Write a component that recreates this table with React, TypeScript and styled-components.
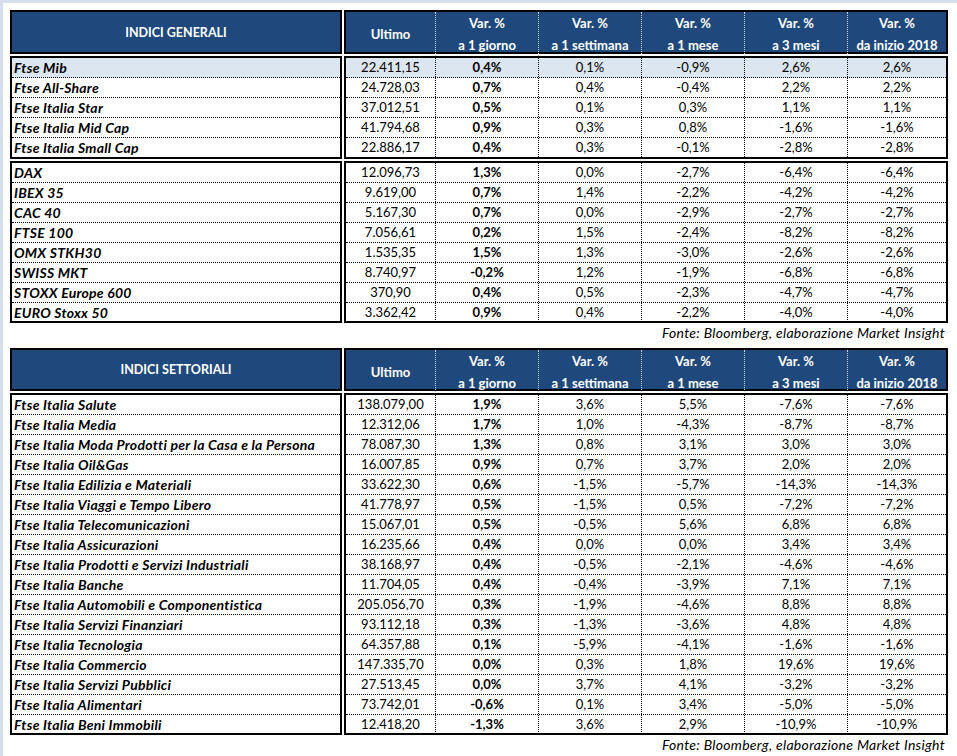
import { createGlobalStyle, styled } from "styled-components";

const GlobalStyle = createGlobalStyle`
  html, body {
    margin: 0;
    padding: 0;
    background: #ffffff;
  }
  body {
    font-family: Lato, "Open Sans", "Liberation Sans", sans-serif;
    color: #000;
  }
`;

const Page = styled.div`
  width: 957px;
  height: 756px;
  box-sizing: border-box;
  border-top: 3px solid #d5deeb;
  border-left: 3px solid #d5deeb;
  padding: 7px 0 0 7px;
  overflow: hidden;
`;

const Table = styled.div`
  display: flex;
  flex-direction: column;
  gap: 2px;
  width: 938px;
`;

const Block = styled.div`
  display: flex;
  gap: 2px;
`;

const NameBox = styled.div`
  width: 332px;
  box-sizing: border-box;
  border: 2px solid #000;
`;

const DataBox = styled.div`
  width: 604px;
  box-sizing: border-box;
  border: 2px solid #000;
`;

const cols = "89px 103px 103px 103px 103px 1fr";

const HeadName = styled.div<{ $h: number }>`
  height: ${(p) => p.$h}px;
  background: #1f497d;
  color: #fff;
  font-weight: 700;
  font-size: 12.5px;
  display: flex;
  align-items: center;
  justify-content: center;
`;

const HeadRow = styled.div<{ $h: number }>`
  height: ${(p) => p.$h}px;
  background: #1f497d;
  display: grid;
  grid-template-columns: ${cols};
`;

const HeadCell = styled.div<{ $sep?: boolean; $single?: boolean }>`
  color: #fff;
  font-weight: 700;
  font-size: 13px;
  line-height: ${(p) => (p.$single ? "normal" : "22px")};
  display: flex;
  flex-direction: column;
  align-items: center;
  justify-content: ${(p) => (p.$single ? "center" : "flex-start")};
  white-space: nowrap;
  border-left: ${(p) => (p.$sep ? "1px dotted #c8d2e0" : "none")};
`;

const NameRow = styled.div<{ $hl?: boolean; $last: number }>`
  height: 20px;
  box-sizing: border-box;
  border-bottom: 1px dotted #000;
  background: ${(p) => (p.$hl ? "#dce6f1" : "transparent")};
  font-size: 14px;
  letter-spacing: 0.25px;
  font-weight: 700;
  font-style: italic;
  line-height: 19px;
  padding-left: 2px;
  white-space: nowrap;
  &:last-child {
    border-bottom: none;
    height: ${(p) => p.$last}px;
  }
`;

const DataRow = styled.div<{ $hl?: boolean; $last: number }>`
  height: 20px;
  box-sizing: border-box;
  border-bottom: 1px dotted #000;
  background: ${(p) => (p.$hl ? "#dce6f1" : "transparent")};
  display: grid;
  grid-template-columns: ${cols};
  &:last-child {
    border-bottom: none;
    height: ${(p) => p.$last}px;
  }
`;

const Cell = styled.div<{ $sep?: boolean; $bold?: boolean }>`
  font-size: 13px;
  line-height: 19px;
  text-align: center;
  font-weight: ${(p) => (p.$bold ? 700 : 400)};
  border-left: ${(p) => (p.$sep ? "1px dotted #000" : "none")};
`;

const Source = styled.div<{ $h: number }>`
  height: ${(p) => p.$h}px;
  width: 935px;
  text-align: right;
  font-size: 14px;
  letter-spacing: 0.3px;
  font-style: italic;
  line-height: 20px;
`;

type Row = [string, string, string, string, string, string, string];

const generali1: Row[] = [
  ["Ftse Mib", "22.411,15", "0,4%", "0,1%", "-0,9%", "2,6%", "2,6%"],
  ["Ftse All-Share", "24.728,03", "0,7%", "0,4%", "-0,4%", "2,2%", "2,2%"],
  ["Ftse Italia Star", "37.012,51", "0,5%", "0,1%", "0,3%", "1,1%", "1,1%"],
  ["Ftse Italia Mid Cap", "41.794,68", "0,9%", "0,3%", "0,8%", "-1,6%", "-1,6%"],
  ["Ftse Italia Small Cap", "22.886,17", "0,4%", "0,3%", "-0,1%", "-2,8%", "-2,8%"],
];

const generali2: Row[] = [
  ["DAX", "12.096,73", "1,3%", "0,0%", "-2,7%", "-6,4%", "-6,4%"],
  ["IBEX 35", "9.619,00", "0,7%", "1,4%", "-2,2%", "-4,2%", "-4,2%"],
  ["CAC 40", "5.167,30", "0,7%", "0,0%", "-2,9%", "-2,7%", "-2,7%"],
  ["FTSE 100", "7.056,61", "0,2%", "1,5%", "-2,4%", "-8,2%", "-8,2%"],
  ["OMX STKH30", "1.535,35", "1,5%", "1,3%", "-3,0%", "-2,6%", "-2,6%"],
  ["SWISS MKT", "8.740,97", "-0,2%", "1,2%", "-1,9%", "-6,8%", "-6,8%"],
  ["STOXX Europe 600", "370,90", "0,4%", "0,5%", "-2,3%", "-4,7%", "-4,7%"],
  ["EURO Stoxx 50", "3.362,42", "0,9%", "0,4%", "-2,2%", "-4,0%", "-4,0%"],
];

const settoriali: Row[] = [
  ["Ftse Italia Salute", "138.079,00", "1,9%", "3,6%", "5,5%", "-7,6%", "-7,6%"],
  ["Ftse Italia Media", "12.312,06", "1,7%", "1,0%", "-4,3%", "-8,7%", "-8,7%"],
  ["Ftse Italia Moda Prodotti per la Casa e la Persona", "78.087,30", "1,3%", "0,8%", "3,1%", "3,0%", "3,0%"],
  ["Ftse Italia Oil&Gas", "16.007,85", "0,9%", "0,7%", "3,7%", "2,0%", "2,0%"],
  ["Ftse Italia Edilizia e Materiali", "33.622,30", "0,6%", "-1,5%", "-5,7%", "-14,3%", "-14,3%"],
  ["Ftse Italia Viaggi e Tempo Libero", "41.778,97", "0,5%", "-1,5%", "0,5%", "-7,2%", "-7,2%"],
  ["Ftse Italia Telecomunicazioni", "15.067,01", "0,5%", "-0,5%", "5,6%", "6,8%", "6,8%"],
  ["Ftse Italia Assicurazioni", "16.235,66", "0,4%", "0,0%", "0,0%", "3,4%", "3,4%"],
  ["Ftse Italia Prodotti e Servizi Industriali", "38.168,97", "0,4%", "-0,5%", "-2,1%", "-4,6%", "-4,6%"],
  ["Ftse Italia Banche", "11.704,05", "0,4%", "-0,4%", "-3,9%", "7,1%", "7,1%"],
  ["Ftse Italia Automobili e Componentistica", "205.056,70", "0,3%", "-1,9%", "-4,6%", "8,8%", "8,8%"],
  ["Ftse Italia Servizi Finanziari", "93.112,18", "0,3%", "-1,3%", "-3,6%", "4,8%", "4,8%"],
  ["Ftse Italia Tecnologia", "64.357,88", "0,1%", "-5,9%", "-4,1%", "-1,6%", "-1,6%"],
  ["Ftse Italia Commercio", "147.335,70", "0,0%", "0,3%", "1,8%", "19,6%", "19,6%"],
  ["Ftse Italia Servizi Pubblici", "27.513,45", "0,0%", "3,7%", "4,1%", "-3,2%", "-3,2%"],
  ["Ftse Italia Alimentari", "73.742,01", "-0,6%", "0,1%", "3,4%", "-5,0%", "-5,0%"],
  ["Ftse Italia Beni Immobili", "12.418,20", "-1,3%", "3,6%", "2,9%", "-10,9%", "-10,9%"],
];

const periods = ["a 1 giorno", "a 1 settimana", "a 1 mese", "a 3 mesi", "da inizio 2018"];

function Header({ title, h }: { title: string; h: number }) {
  return (
    <Block>
      <NameBox>
        <HeadName $h={h}>{title}</HeadName>
      </NameBox>
      <DataBox>
        <HeadRow $h={h}>
          <HeadCell $single>Ultimo</HeadCell>
          {periods.map((p) => (
            <HeadCell $sep key={p}>
              <span>Var. %</span>
              <span>{p}</span>
            </HeadCell>
          ))}
        </HeadRow>
      </DataBox>
    </Block>
  );
}

function Group({ rows, highlightFirst, last = 18 }: { rows: Row[]; highlightFirst?: boolean; last?: number }) {
  return (
    <Block>
      <NameBox>
        {rows.map((r, i) => (
          <NameRow key={r[0]} $hl={highlightFirst && i == 0} $last={last}>
            {r[0]}
          </NameRow>
        ))}
      </NameBox>
      <DataBox>
        {rows.map((r, i) => (
          <DataRow key={r[0]} $hl={highlightFirst && i == 0} $last={last}>
            {r.slice(1).map((v, j) => (
              <Cell key={j} $sep={j > 0} $bold={j == 1}>
                {v}
              </Cell>
            ))}
          </DataRow>
        ))}
      </DataBox>
    </Block>
  );
}

export default function App() {
  return (
    <>
      <GlobalStyle />
      <Page>
        <Table>
          <Header title="INDICI GENERALI" h={40} />
          <Group rows={generali1} highlightFirst last={19} />
          <Group rows={generali2} />
        </Table>
        <Source $h={25}>Fonte: Bloomberg, elaborazione Market Insight</Source>
        <Table>
          <Header title="INDICI SETTORIALI" h={39} />
          <Group rows={settoriali} />
        </Table>
        <Source $h={22}>Fonte: Bloomberg, elaborazione Market Insight</Source>
      </Page>
    </>
  );
}
